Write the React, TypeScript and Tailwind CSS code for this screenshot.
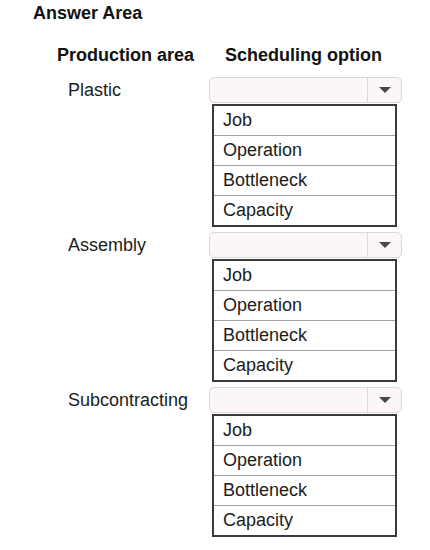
import React from "react"

const options = ["Job", "Operation", "Bottleneck", "Capacity"]
const areas = ["Plastic", "Assembly", "Subcontracting"]

function Dropdown() {
  return (
    <div className="flex flex-col">
      <div className="flex h-[26px] w-[193px] rounded-[5px] border border-[#d8d8d8] bg-[#fdf6f7]">
        <div className="flex-1" />
        <div className="flex w-[34px] items-center justify-center border-l border-[#dadada]">
          <svg width="12" height="6" viewBox="0 0 12 6">
            <path d="M0 0 H12 L6 6 Z" fill="#474747" />
          </svg>
        </div>
      </div>
      <div className="ml-[3px] mt-px w-[185px] border-2 border-[#3a3a3a] bg-white">
        {options.map((opt, i) => (
          <div
            key={opt}
            className={
              i === 0
                ? "flex h-[29px] items-center pl-[9px]"
                : "flex h-[30px] items-center border-t border-[#a3a3a3] pl-[9px]"
            }
          >
            {opt}
          </div>
        ))}
      </div>
    </div>
  )
}

export default function App() {
  return (
    <div
      className="h-[550px] w-[430px] bg-white text-[18px] text-[#1c1c1c]"
      style={{ fontFamily: '"Liberation Sans", Arial, sans-serif' }}
    >
      <div className="pl-[33px] pt-[2px] text-[18px] font-bold leading-[22px] text-[#111]">Answer Area</div>

      <div className="mt-[20px] flex pl-[57px] font-bold leading-[22px] text-[#111]">
        <div className="w-[168px]">Production area</div>
        <div>Scheduling option</div>
      </div>

      <div className="mt-[11px] flex flex-col gap-[5px] pl-[68px]">
        {areas.map((area) => (
          <div key={area} className="flex">
            <div className="flex h-[26px] w-[141px] items-center leading-[22px]">{area}</div>
            <Dropdown />
          </div>
        ))}
      </div>
    </div>
  )
}
